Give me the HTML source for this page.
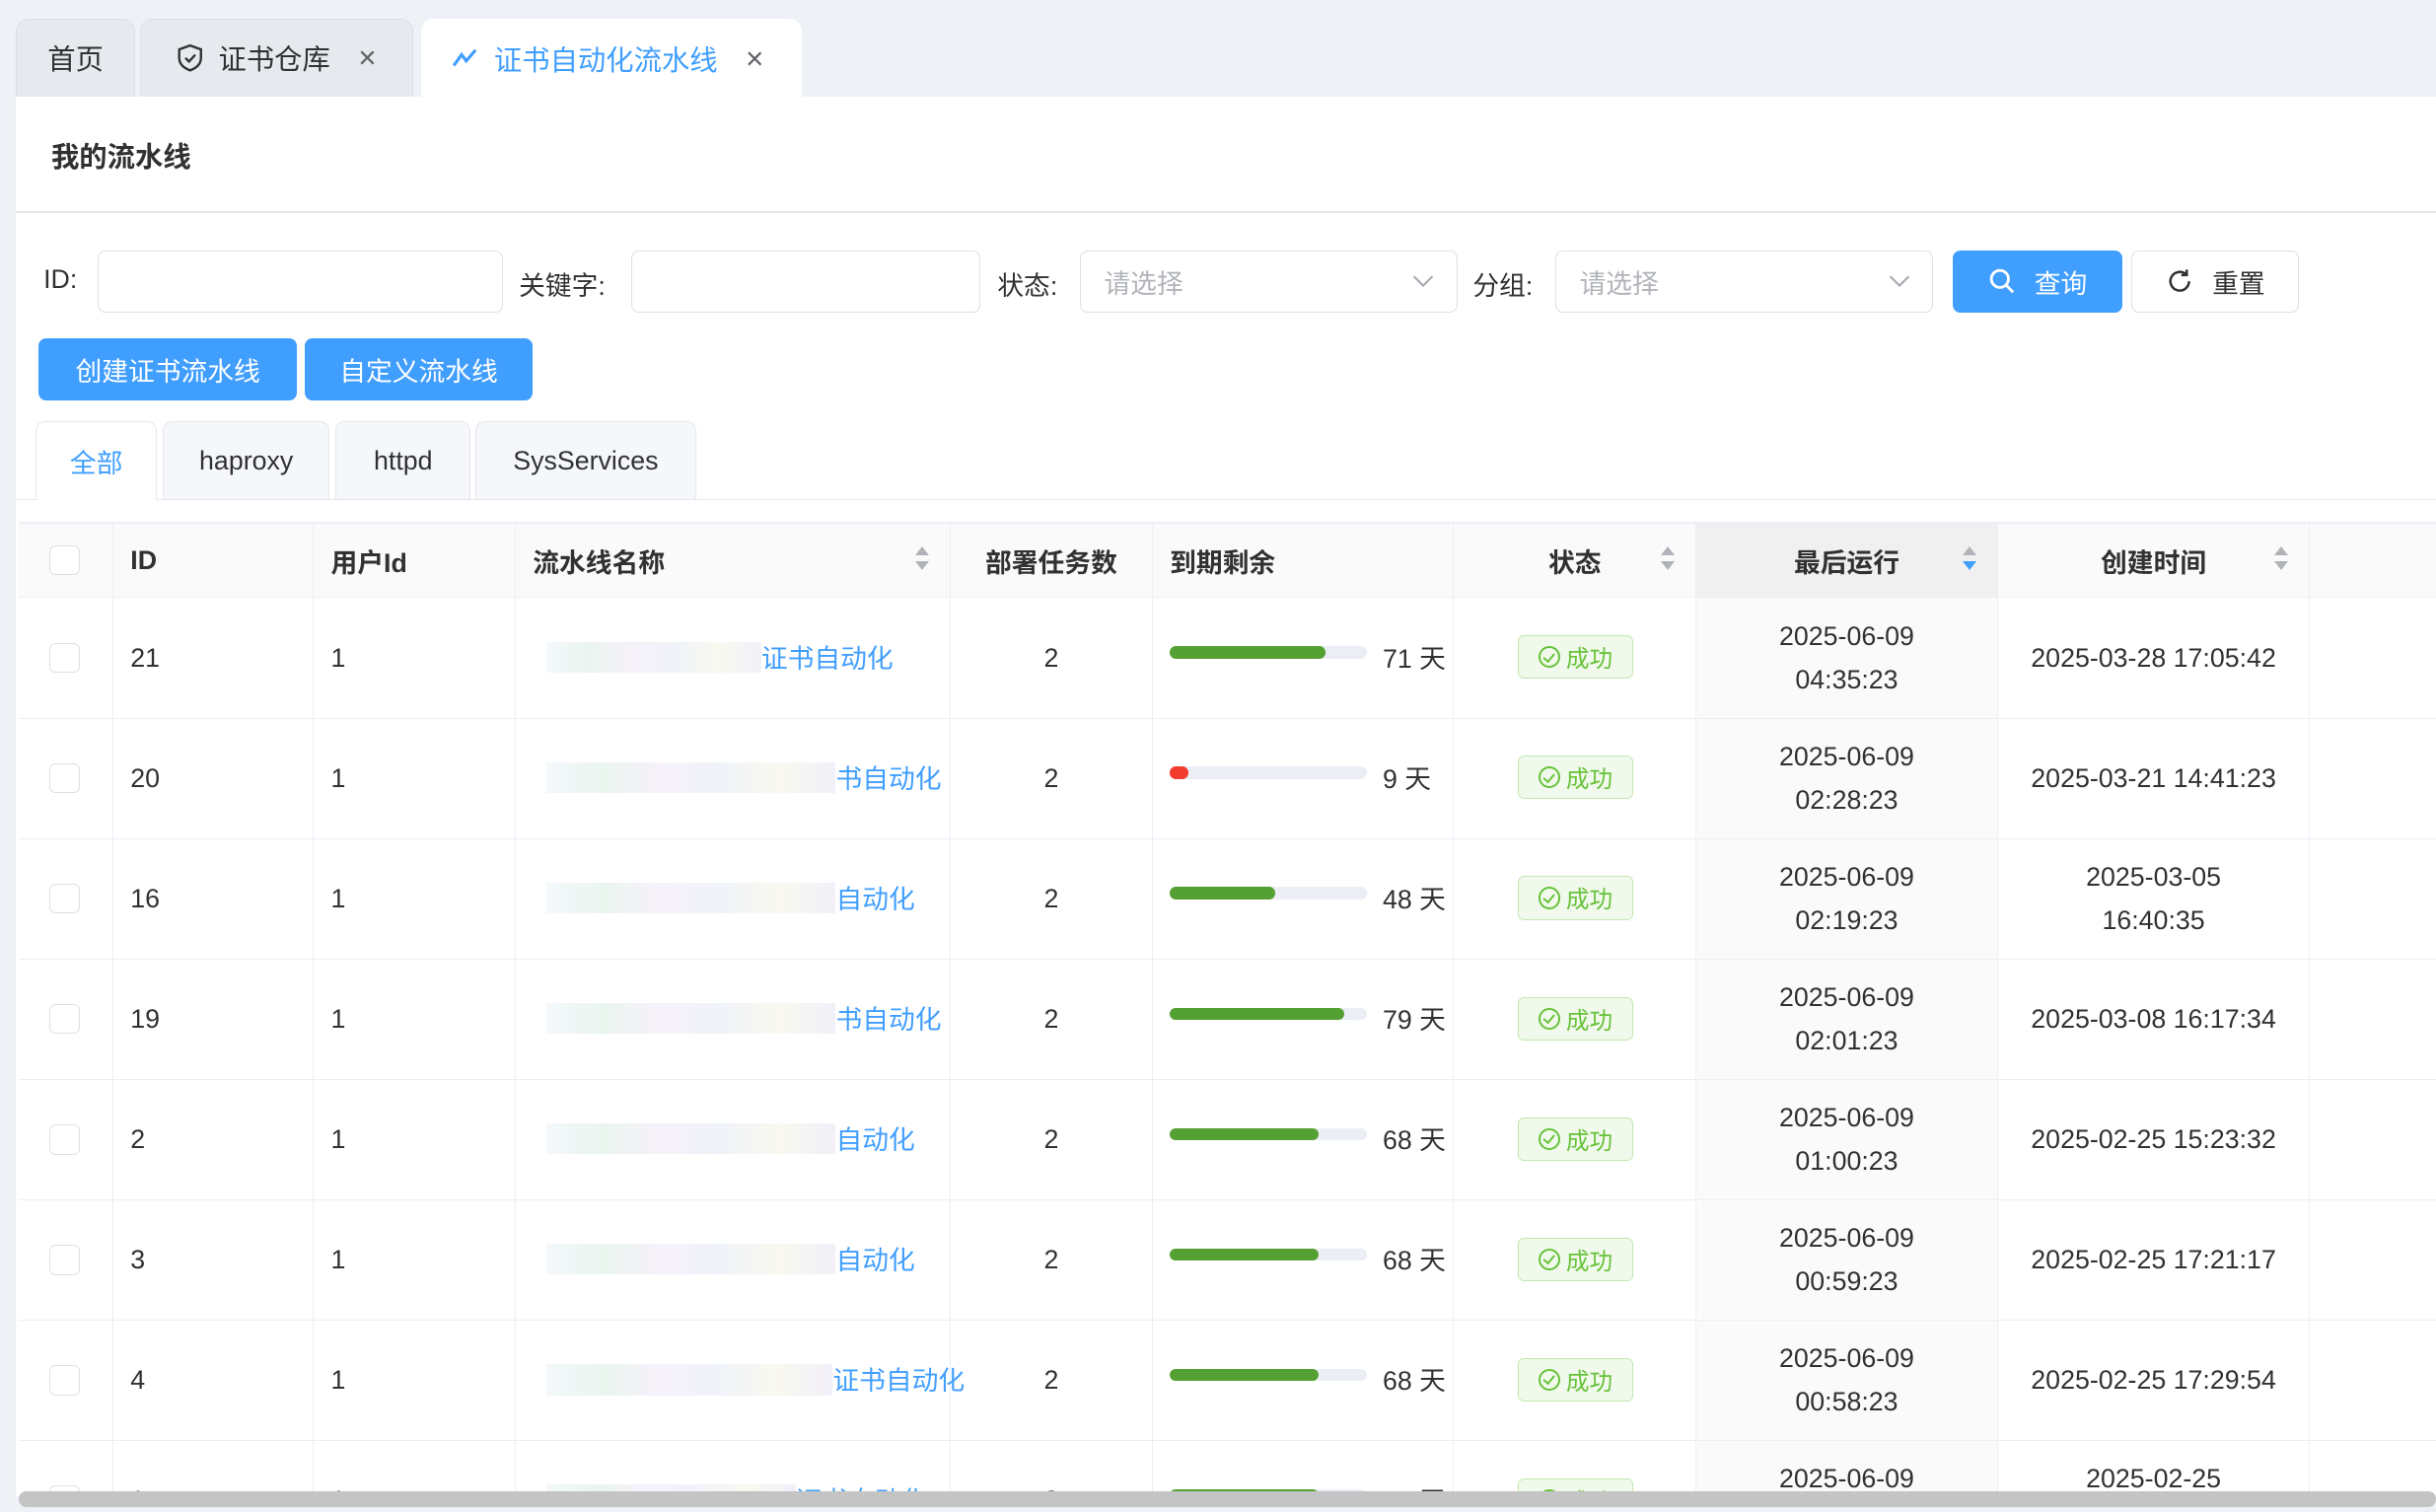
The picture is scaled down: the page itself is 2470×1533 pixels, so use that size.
<!DOCTYPE html>
<html><head><meta charset="utf-8">
<style>
html,body{margin:0;padding:0;}
body{width:2470px;height:1532px;overflow:hidden;background:#fff;}
#z{zoom:1.57525;width:1568px;height:973px;position:relative;overflow:hidden;background:#eef1f5;font-family:"Liberation Sans","Noto Sans CJK SC",sans-serif;color:#303133;font-size:17px;}
.a{position:absolute;}
.tab{position:absolute;top:12px;height:50px;background:#e6e9ee;border:1px solid #dcdfe6;border-bottom:none;border-radius:8px 8px 0 0;box-sizing:border-box;display:flex;align-items:center;font-size:18px;}
.inp{position:absolute;top:161px;height:40px;border:1px solid #dcdfe6;border-radius:5px;box-sizing:border-box;background:#fff;color:#b0b3b8;font-size:17px;display:flex;align-items:center;padding-left:15px;}
.lbl{position:absolute;top:170px;font-size:17px;color:#303133;}
.btn{position:absolute;height:40px;border-radius:5px;box-sizing:border-box;display:flex;align-items:center;justify-content:center;font-size:17px;}
.blue{background:#409eff;color:#fff;}
.st{position:absolute;top:271px;height:51px;border:1px solid #e4e7ed;border-radius:6px 6px 0 0;box-sizing:border-box;background:#f5f7fa;display:flex;align-items:center;justify-content:center;font-size:17px;}
.cell{position:absolute;box-sizing:border-box;border-right:1px solid #ebeef5;border-bottom:1px solid #ebeef5;display:flex;align-items:center;font-size:17px;}
.h{font-weight:bold;background:#fafafa;color:#303133;}
.cb{width:18px;height:18px;border:1px solid #dcdfe6;border-radius:4px;background:#fff;}
.sort{position:absolute;width:10px;}
.sort:before{content:"";position:absolute;left:0;top:0;border:5px solid transparent;border-bottom:6px solid #b0b3b8;border-top:none;}
.sort:after{content:"";position:absolute;left:0;top:9px;border:5px solid transparent;border-top:6px solid #b0b3b8;border-bottom:none;}
.sort.d:after{border-top-color:#409eff;}
.bar{position:absolute;left:753px;width:127px;height:8px;background:#ebeef5;border-radius:4px;}
.bar i{position:absolute;left:0;top:0;height:8px;border-radius:4px;background:#55a032;}
.tag{position:absolute;left:977px;width:74px;height:28px;border:1px solid #c2e7b0;background:#f0f9eb;border-radius:4px;box-sizing:border-box;color:#67c23a;font-size:15px;display:flex;align-items:center;justify-content:center;gap:4px;}
.ok{width:14px;height:14px;border:1.5px solid #67c23a;border-radius:50%;box-sizing:border-box;position:relative;}
.ok:after{content:"";position:absolute;left:3.5px;top:1.5px;width:3px;height:6px;border-right:1.5px solid #67c23a;border-bottom:1.5px solid #67c23a;transform:rotate(40deg);}
.c{justify-content:center;text-align:center;line-height:28px;}
.blur{position:absolute;height:20px;background:linear-gradient(90deg,#f3f7fb,#e8f4ee,#f6f0fa,#eef2f8,#f8f8ee,#f1eef8);opacity:.9;}
.nm{position:absolute;color:#409eff;font-size:17px;}
</style></head><body><div id="z">
<div class="tab" style="left:10px;width:77px;padding-left:20px;">首页</div>
<div class="tab" style="left:90px;width:176px;padding-left:22px;">
<svg width="20" height="20" viewBox="0 0 20 20" style="margin-right:8px"><path d="M10 2 L17 4.5 V10 C17 14 14 16.5 10 18 C6 16.5 3 14 3 10 V4.5 Z" fill="none" stroke="#303133" stroke-width="1.5"/><path d="M7 10 L9.3 12.3 L13.3 8" fill="none" stroke="#303133" stroke-width="1.5"/></svg>证书仓库<span style="margin-left:18px;color:#606266;font-size:20px">×</span></div>
<div class="tab" style="left:271px;width:245px;background:#fff;border:none;padding-left:19px;color:#409eff;height:51px;">
<svg width="20" height="16" viewBox="0 0 20 16" style="margin-right:8px"><path d="M2 13 L7 6 L10 10 L16 3" fill="none" stroke="#409eff" stroke-width="2"/></svg>证书自动化流水线<span style="margin-left:18px;color:#606266;font-size:20px">×</span></div>
<div class="a" style="left:10px;top:62px;width:1558px;height:911px;background:#fff;"></div>
<div class="a" style="left:33px;top:87px;font-size:18px;font-weight:bold;color:#303133;">我的流水线</div>
<div class="a" style="left:10px;top:136px;width:1558px;height:1px;background:#e4e7ed;"></div>
<div class="lbl" style="left:28px;">ID:</div>
<div class="inp" style="left:63px;width:261px;"></div>
<div class="lbl" style="left:334px;">关键字:</div>
<div class="inp" style="left:406px;width:225px;"></div>
<div class="lbl" style="left:642px;">状态:</div>
<div class="inp" style="left:695px;width:243px;">请选择<svg class="a" style="right:14px;top:14px" width="14" height="10" viewBox="0 0 14 10"><path d="M1 2 L7 8 L13 2" fill="none" stroke="#a8abb2" stroke-width="1.4"/></svg></div>
<div class="lbl" style="left:948px;">分组:</div>
<div class="inp" style="left:1001px;width:243px;">请选择<svg class="a" style="right:14px;top:14px" width="14" height="10" viewBox="0 0 14 10"><path d="M1 2 L7 8 L13 2" fill="none" stroke="#a8abb2" stroke-width="1.4"/></svg></div>
<div class="btn blue" style="left:1257px;top:161px;width:109px;"><svg width="18" height="18" viewBox="0 0 18 18" style="margin-right:12px"><circle cx="7.5" cy="7.5" r="5.5" fill="none" stroke="#fff" stroke-width="1.8"/><path d="M11.5 11.5 L16 16" stroke="#fff" stroke-width="1.8"/></svg>查询</div>
<div class="btn" style="left:1372px;top:161px;width:108px;border:1px solid #dcdfe6;color:#303133;"><svg width="18" height="18" viewBox="0 0 18 18" style="margin-right:12px"><path d="M15 9 A6 6 0 1 1 13 4.5" fill="none" stroke="#303133" stroke-width="1.6"/><path d="M13.5 1.5 V5 H10" fill="none" stroke="#303133" stroke-width="1.6"/></svg>重置</div>
<div class="btn blue" style="left:25px;top:218px;width:166px;">创建证书流水线</div>
<div class="btn blue" style="left:196px;top:218px;width:147px;">自定义流水线</div>
<div class="a" style="left:10px;top:321px;width:1558px;height:1px;background:#e4e7ed;"></div>
<div class="st" style="left:23px;width:78px;background:#fff;border-bottom:1px solid #fff;color:#409eff;">全部</div>
<div class="st" style="left:105px;width:107px;">haproxy</div>
<div class="st" style="left:216px;width:87px;">httpd</div>
<div class="st" style="left:306px;width:142px;">SysServices</div>
<div class="a" style="left:12px;top:336px;width:1556px;height:1px;background:#ebeef5;"></div>
<div class="a" style="left:1092px;top:384px;width:194px;height:580px;background:#fafafa;"></div>
<div id="tbl"></div>
<div class="a" style="left:0;top:963px;width:1568px;height:10px;background:#eef1f5;"></div>
<div class="a" style="left:12px;top:960px;width:1556px;height:10px;background:#c4c4c4;border-radius:5px;"></div>
</div>
<script>
(function(){
var cols=[12,73,202,332,612,742,936,1092,1286,1487,1568];
var T=document.getElementById('tbl'),h='';
function cell(i,tp,ht,cls,content,style){h+='<div class="cell '+cls+'" style="left:'+cols[i]+'px;top:'+tp+'px;width:'+(cols[i+1]-cols[i])+'px;height:'+ht+'px;'+(style||'')+'">'+content+'</div>';}
var heads=['<div class="cb" style="margin-left:20px"></div>','ID','用户Id','流水线名称','部署任务数','到期剩余','状态','最后运行','创建时间',''];
for(var i=0;i<10;i++){var st='padding-left:11px;';if(i==0)st='';if(i>=6&&i<=8)st='justify-content:center;';if(i==4)st='justify-content:center;';if(i==7)st+='background:#f0f0f0;';cell(i,337,48,'h',heads[i],st+(i==9?'border-right:none;':''));}
h+='<div class="sort" style="left:589px;top:352px"></div><div class="sort" style="left:1069px;top:352px"></div><div class="sort d" style="left:1263px;top:352px"></div><div class="sort" style="left:1464px;top:352px"></div>';
var rows=[['21','71',100,'2025-06-09<br>04:35:23','2025-03-28 17:05:42','证书自动化',490],
['20','9',0,'2025-06-09<br>02:28:23','2025-03-21 14:41:23','书自动化',538],
['16','48',68,'2025-06-09<br>02:19:23','2025-03-05<br>16:40:35','自动化',538],
['19','79',112,'2025-06-09<br>02:01:23','2025-03-08 16:17:34','书自动化',538],
['2','68',96,'2025-06-09<br>01:00:23','2025-02-25 15:23:32','自动化',538],
['3','68',96,'2025-06-09<br>00:59:23','2025-02-25 17:21:17','自动化',538],
['4','68',96,'2025-06-09<br>00:58:23','2025-02-25 17:29:54','证书自动化',536],
['1','68',96,'2025-06-09<br>00:57:23','2025-02-25<br>17:30:00','证书自动化',512]];
for(var r=0;r<rows.length;r++){var R=rows[r],tp=385+r*77.5,ht=77.5;
cell(0,tp,ht,'','<div class="cb" style="margin-left:20px"></div>');
cell(1,tp,ht,'',R[0],'padding-left:11px;');
cell(2,tp,ht,'','1','padding-left:11px;');
cell(3,tp,ht,'','');
h+='<div class="blur" style="left:352px;top:'+(tp+28)+'px;width:'+(R[6]-352)+'px"></div>';
h+='<div class="nm" style="left:'+R[6]+'px;top:'+(tp+25)+'px">'+R[5]+'</div>';
cell(4,tp,ht,'','2','justify-content:center;');
cell(5,tp,ht,'','');
var bt=tp+31;
if(R[2]>0)h+='<div class="bar" style="top:'+bt+'px"><i style="width:'+R[2]+'px"></i></div>';
else h+='<div class="bar" style="top:'+bt+'px"><i style="width:12px;background:#f23c2f"></i></div>';
h+='<div class="a" style="left:890px;top:'+(tp+25)+'px">'+R[1]+' 天</div>';
cell(6,tp,ht,'','');
h+='<div class="tag" style="top:'+(tp+24)+'px"><span class="ok"></span>成功</div>';
cell(7,tp,ht,'c',R[3],'background:#fafafa;');
cell(8,tp,ht,'c',R[4]);
cell(9,tp,ht,'','','border-right:none;');}
T.innerHTML=h;
})();
</script>
</body></html>
